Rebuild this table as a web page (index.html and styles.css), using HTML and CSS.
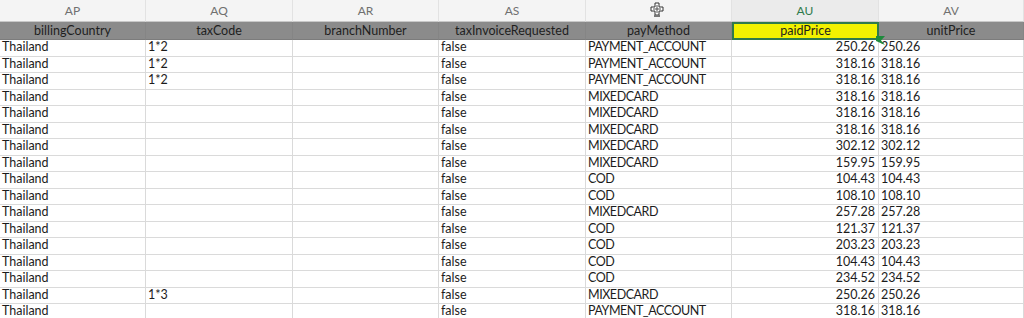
FILE: index.html
```html
<!DOCTYPE html>
<html>
<head>
<meta charset="utf-8">
<link rel="stylesheet" href="styles.css">
</head>
<body>
<div class="sheet">
  <div class="row colheads">
    <div class="c">AP</div>
    <div class="c">AQ</div>
    <div class="c">AR</div>
    <div class="c">AS</div>
    <div class="c cursor-cell">
      <svg class="cursor" width="14" height="16" viewBox="0 0 14 16">
        <path d="M5 1h4v4h4v4h-4v4H5V9H1V5h4z" fill="#fff" stroke="#333" stroke-width="1"/>
        <path d="M7 3v8M3 7h8" stroke="#555" stroke-width="1"/>
        <path d="M4 13h6v2H4z" fill="#777"/>
      </svg>
    </div>
    <div class="c sel">AU</div>
    <div class="c">AV</div>
  </div>
  <div class="row fields">
    <div class="c">billingCountry</div>
    <div class="c">taxCode</div>
    <div class="c">branchNumber</div>
    <div class="c">taxInvoiceRequested</div>
    <div class="c">payMethod</div>
    <div class="c active">paidPrice<svg class="handle" width="9" height="9" viewBox="0 0 9 9"><path d="M0 0H9L5 4.5 9 9 0 5z" fill="#1e8a3c"/></svg></div>
    <div class="c">unitPrice</div>
  </div>
  <div id="rows"></div>
</div>
<script>
const data = [
  ["1*2","PAYMENT_ACCOUNT","250.26"],
  ["1*2","PAYMENT_ACCOUNT","318.16"],
  ["1*2","PAYMENT_ACCOUNT","318.16"],
  ["","MIXEDCARD","318.16"],
  ["","MIXEDCARD","318.16"],
  ["","MIXEDCARD","318.16"],
  ["","MIXEDCARD","302.12"],
  ["","MIXEDCARD","159.95"],
  ["","COD","104.43"],
  ["","COD","108.10"],
  ["","MIXEDCARD","257.28"],
  ["","COD","121.37"],
  ["","COD","203.23"],
  ["","COD","104.43"],
  ["","COD","234.52"],
  ["1*3","MIXEDCARD","250.26"],
  ["","PAYMENT_ACCOUNT","318.16"]
];
const host = document.getElementById("rows");
for (const [tax, pm, price] of data) {
  const r = document.createElement("div");
  r.className = "row data";
  const cells = [["Thailand",""],[tax,""],["",""],["false",""],[pm,"pm"],[price,"num"],[price,""]];
  for (const [t, cls] of cells) {
    const c = document.createElement("div");
    c.className = "c" + (cls ? " " + cls : "");
    c.textContent = t;
    r.appendChild(c);
  }
  host.appendChild(r);
}
</script>
</body>
</html>
```

FILE: styles.css
```css
html, body {
  margin: 0;
  padding: 0;
  background: #ffffff;
  overflow: hidden;
}
body {
  width: 1024px;
  height: 318px;
  font-family: Lato, "Open Sans", sans-serif;
  font-size: 12.5px;
  color: #1c1c1c;
}
.sheet {
  width: 1024px;
  height: 318px;
  overflow: hidden;
}
.row {
  display: grid;
  grid-template-columns: 146px 147px 146px 147px 146px 147px 145px;
}
.c {
  box-sizing: border-box;
  border-right: 1px solid #dadada;
  border-bottom: 1px solid #dadada;
  white-space: nowrap;
  overflow: hidden;
  position: relative;
}
.colheads {
  height: 22px;
  background: #f4f4f4;
}
.colheads .c {
  text-align: center;
  line-height: 21px;
  color: #707070;
  font-size: 12px;
  border-right-color: #e2e2e2;
  border-bottom: 1px solid #c8c8c8;
  overflow: visible;
}
.colheads .c.sel {
  color: #2f7a4c;
  background: #ebebeb;
}
.cursor-cell { z-index: 2; }
.cursor {
  position: absolute;
  left: 64px;
  top: 2px;
}
.fields {
  height: 18px;
  background: #8b8b8b;
}
.fields .c {
  text-align: center;
  line-height: 17px;
  color: #1e1e1e;
  border-right-color: #858585;
  border-bottom: 1px solid #7c7c7c;
  overflow: visible;
}
.fields .c.active {
  background: #f2f200;
  border: 2px solid #2f7a4c;
  line-height: 14px;
  z-index: 3;
}
.handle {
  position: absolute;
  right: -8px;
  bottom: -7px;
}
.data {
  height: 16.5px;
}
.data .c {
  line-height: 14px;
  padding-left: 2px;
}
.data .c.pm {
  letter-spacing: -0.45px;
}
.data .c.num {
  text-align: right;
  padding-left: 0;
  padding-right: 3px;
}
```
